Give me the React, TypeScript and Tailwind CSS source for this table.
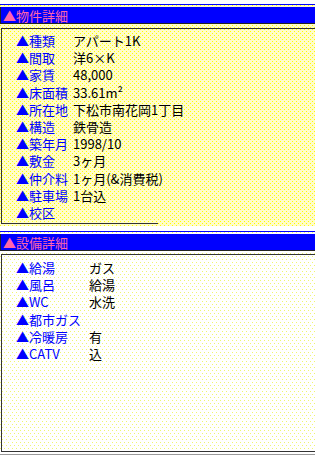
import React from "react";

const bukken: [string, string][] = [
  ["種類", "アパート1K"],
  ["間取", "洋6×K"],
  ["家賃", "48,000"],
  ["床面積", "33.61m²"],
  ["所在地", "下松市南花岡1丁目"],
  ["構造", "鉄骨造"],
  ["築年月", "1998/10"],
  ["敷金", "3ヶ月"],
  ["仲介料", "1ヶ月(&消費税)"],
  ["駐車場", "1台込"],
  ["校区", ""],
];

const setsubi: [string, string][] = [
  ["給湯", "ガス"],
  ["風呂", "給湯"],
  ["WC", "水洗"],
  ["都市ガス", ""],
  ["冷暖房", "有"],
  ["CATV", "込"],
];

const font = "font-['Noto_Sans_CJK_JP','Noto_Sans',sans-serif]";

// staggered yellow dots on a pale yellow ground
const dense =
  "bg-[#fffcc8] bg-[image:conic-gradient(from_270deg_at_1px_1px,#ffff00_25%,transparent_0),conic-gradient(from_270deg_at_1px_1px,#ffff00_25%,transparent_0)] bg-[length:4px_4px] bg-[position:0_0,2px_2px]";
// paler, sparser dots
const sparse =
  "bg-white bg-[image:conic-gradient(from_270deg_at_1px_1px,#f0f570_25%,transparent_0),conic-gradient(from_270deg_at_1px_1px,#f0f570_25%,transparent_0)] bg-[length:4px_6px] bg-[position:0_0,2px_3px]";

const TitleBar = ({ title }: { title: string }) => (
  <div className="h-[17px] bg-[#0000ff] border-l border-b border-[#222] pl-[2px] flex items-center">
    <span className="text-[#ff66aa] text-[13px] leading-none">▲{title}</span>
  </div>
);

const Rows = ({
  rows,
  labelW,
}: {
  rows: [string, string][];
  labelW: string;
}) => (
  <div className="pl-[14px]">
    {rows.map(([k, v]) => (
      <div key={k} className="flex h-[17.2px] items-center text-[13px] leading-none">
        <span className={`${labelW} text-[#0000ff] shrink-0 whitespace-nowrap`}>▲{k}</span>
        <span className="text-black whitespace-nowrap">{v}</span>
      </div>
    ))}
  </div>
);

export default function App() {
  return (
    <div className={`w-[315px] h-[458px] bg-white pt-[4px] ${font} overflow-hidden`}>
      <div className={`${dense} border-t border-[#0000ff] pt-[2px] h-[222px]`}>
        <TitleBar title="物件詳細" />
        <div className="mt-[4px] border-t border-l border-[#333] h-[196px] ml-px relative">
          <div className="pt-[3px]">
            <Rows rows={bukken} labelW="w-[57px]" />
          </div>
          <div className="absolute left-[-1px] bottom-0 w-[157px] border-b border-[#333]" />
        </div>
      </div>
      <div className="h-[5px]" />
      <div className={`${sparse} border-t border-[#0000ff] pt-[2px]`}>
        <TitleBar title="設備詳細" />
        <div className="mt-[3px] border-t border-l border-b border-[#333] h-[198px] ml-px">
          <div className="pt-[4px]">
            <Rows rows={setsubi} labelW="w-[73px]" />
          </div>
        </div>
        <div className="h-[2px]" />
        <div className="border-b border-[#999]" />
      </div>
    </div>
  );
}
